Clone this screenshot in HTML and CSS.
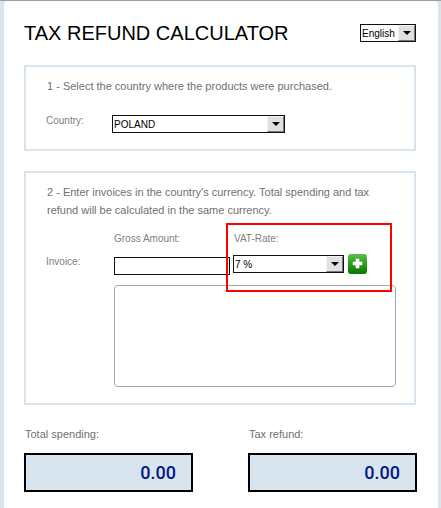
FILE: index.html
```html
<!DOCTYPE html>
<html lang="en">
<head>
<meta charset="UTF-8">
<meta name="viewport" content="width=device-width, initial-scale=1">
<title>Tax Refund Calculator</title>
<link rel="stylesheet" href="styles.css">
</head>
<body>

<main class="calculator">
  <header class="header">
    <h1>TAX REFUND CALCULATOR</h1>
    <div class="select language">
      <select aria-label="Language">
        <option>English</option>
      </select>
      <span class="arrow"></span>
    </div>
  </header>

  <section class="panel panel-country">
    <p>1 - Select the country where the products were purchased.</p>
    <div class="country-row">
      <label for="country">Country:</label>
      <div class="select">
        <select id="country">
          <option>POLAND</option>
        </select>
        <span class="arrow"></span>
      </div>
    </div>
  </section>

  <section class="panel panel-invoices">
    <p>2 - Enter invoices in the country's currency. Total spending and tax refund will be calculated in the same currency.</p>
    <div class="invoice-row">
      <span class="row-label">Invoice:</span>
      <div class="field amount">
        <label for="amount">Gross Amount:</label>
        <input type="text" id="amount">
      </div>
      <div class="field vat">
        <label for="vat">VAT-Rate:</label>
        <div class="vat-controls">
          <div class="select">
            <select id="vat">
              <option>7 %</option>
            </select>
            <span class="arrow"></span>
          </div>
          <button type="button" class="add" aria-label="Add invoice">
            <svg viewBox="0 0 19 20" width="19" height="20">
              <defs>
                <linearGradient id="green" x1="0" y1="0" x2="0" y2="1">
                  <stop offset="0" stop-color="#5cc04e"/>
                  <stop offset="0.45" stop-color="#2fa01f"/>
                  <stop offset="1" stop-color="#057a00"/>
                </linearGradient>
              </defs>
              <rect width="19" height="20" rx="3" fill="url(#green)"/>
              <path d="M8 5h3v3h3v3h-3v3H8v-3H5V8h3z" fill="#fff" stroke="#fff" stroke-width="0.6" stroke-linejoin="round"/>
            </svg>
          </button>
        </div>
      </div>
    </div>
    <div class="invoice-list"></div>
  </section>

  <section class="totals">
    <div class="total">
      <label for="spending">Total spending:</label>
      <output id="spending">0.00</output>
    </div>
    <div class="total">
      <label for="refund">Tax refund:</label>
      <output id="refund">0.00</output>
    </div>
  </section>
</main>

</body>
</html>
```
FILE: styles.css
```css
* {
  box-sizing: border-box;
}
html {
  background: #dde5ec;
}
body {
  margin: 0;
  padding: 0 3px 0 4px;
  border-top: 1px solid #a0a0a0;
  font-family: "Liberation Sans", Arial, sans-serif;
  font-size: 11px;
  color: #707070;
}
.calculator {
  min-height: calc(100vh - 1px);
  padding: 22px 21px 16px 20px;
  background: #fff;
  border-radius: 4px 4px 0 0;
}
.header {
  display: flex;
  justify-content: space-between;
  align-items: center;
  margin-bottom: 22px;
  padding-right: 1px;
}
h1 {
  margin: 0;
  font-size: 20px;
  line-height: 20px;
  font-weight: normal;
  color: #000;
}
p {
  margin: 0;
  line-height: 18px;
}
label, .row-label {
  font-size: 10px;
  line-height: 12px;
  color: #808080;
}

/* drop-downs */
.select {
  position: relative;
}
.select select {
  display: block;
  width: 100%;
  height: 18px;
  margin: 0;
  padding: 0 18px 0 1px;
  appearance: none;
  background: #fff;
  border: 1px solid #111;
  border-radius: 0;
  font-family: inherit;
  font-size: 10px;
  color: #000;
}
.arrow {
  position: absolute;
  top: 1px;
  right: 1px;
  width: 17px;
  height: 16px;
  background: #e0e0e0;
  border: 1px solid;
  border-color: #f4f4f4 #777 #777 #f4f4f4;
  pointer-events: none;
}
.arrow::after {
  content: "";
  position: absolute;
  top: 5px;
  left: 4px;
  border: 4px solid transparent;
  border-top-color: #000;
  border-bottom: 0;
}
.language {
  width: 56px;
}

.panel {
  margin-right: 1px;
  margin-bottom: 20px;
  border: 2px solid #d8e4ee;
}
.panel-country {
  padding: 10px 20px 16px;
}
.panel-invoices {
  padding: 10px 18px 16px 20px;
}
.panel p {
  padding-left: 1px;
}
.country-row {
  display: grid;
  grid-template-columns: 66px minmax(0, 173px);
  align-items: start;
  margin-top: 20px;
}

.invoice-row {
  display: grid;
  grid-template-columns: 68px minmax(0, 116px) 1fr;
  column-gap: 0;
  margin-top: 14px;
}
.invoice-row .row-label {
  padding-top: 23px;
}
.field {
  display: flex;
  flex-direction: column;
}
.amount input {
  width: 100%;
  height: 18px;
  margin-top: 12px;
  padding: 0 2px;
  border: 1px solid #111;
  border-radius: 0;
  font-family: inherit;
  font-size: 10px;
}
.vat {
  position: relative;
  padding-left: 3px;
}
.vat label {
  padding-left: 1px;
}
.vat-controls {
  display: flex;
  align-items: center;
  gap: 4px;
  margin-top: 9px;
}
.vat-controls .select {
  flex: 0 1 111px;
}
.add {
  flex: none;
  width: 19px;
  height: 20px;
  padding: 0;
  border: 0;
  background: none;
}
.add svg {
  display: block;
}
/* red frame around the VAT field */
.vat::after {
  content: "";
  position: absolute;
  top: -10px;
  bottom: -17px;
  left: -4px;
  right: 4px;
  border: 2px solid #f00;
  pointer-events: none;
}
.invoice-list {
  height: 102px;
  margin-left: 68px;
  margin-top: 10px;
  border: 1px solid #a8a8a8;
  border-radius: 4px;
}

.totals {
  display: grid;
  grid-template-columns: 1fr 1fr;
  gap: 55px;
  padding-top: 2px;
}
.total label {
  display: block;
  margin-bottom: 12px;
  padding-left: 1px;
  font-size: 11px;
  line-height: 14px;
  color: #707070;
}
.total output {
  display: block;
  padding: 0 15px;
  background: #d8e4ee;
  border: 2px solid #000;
  font-family: Roboto, "Liberation Sans", sans-serif;
  font-size: 18px;
  font-weight: 500;
  line-height: 35px;
  text-align: right;
  color: #00198a;
}
```
